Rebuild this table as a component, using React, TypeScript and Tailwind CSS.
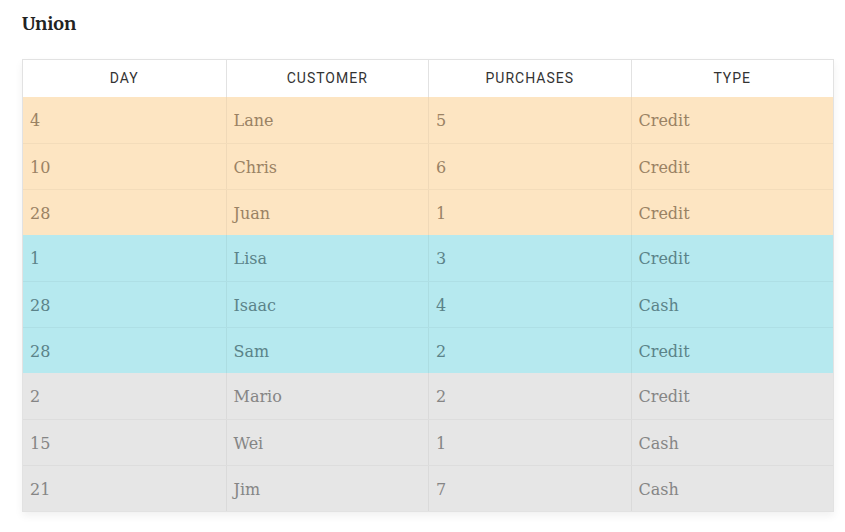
const rows = [
  { day: "4", customer: "Lane", purchases: "5", type: "Credit", tone: "orange" },
  { day: "10", customer: "Chris", purchases: "6", type: "Credit", tone: "orange" },
  { day: "28", customer: "Juan", purchases: "1", type: "Credit", tone: "orange" },
  { day: "1", customer: "Lisa", purchases: "3", type: "Credit", tone: "cyan" },
  { day: "28", customer: "Isaac", purchases: "4", type: "Cash", tone: "cyan" },
  { day: "28", customer: "Sam", purchases: "2", type: "Credit", tone: "cyan" },
  { day: "2", customer: "Mario", purchases: "2", type: "Credit", tone: "gray" },
  { day: "15", customer: "Wei", purchases: "1", type: "Cash", tone: "gray" },
  { day: "21", customer: "Jim", purchases: "7", type: "Cash", tone: "gray" },
];

const toneClass: Record<string, string> = {
  orange: "bg-[#fde5c2] text-[#9a8264]",
  cyan: "bg-[#b6e9ef] text-[#5b8389]",
  gray: "bg-[#e6e6e6] text-[#858585]",
};

const headers = ["DAY", "CUSTOMER", "PURCHASES", "TYPE"];

export default function App() {
  return (
    <div className="min-h-[532px] w-[845px] bg-white px-[22px] pt-[13px]">
      <h2 className="font-['Merriweather','DejaVu_Serif',serif] text-[18px] font-bold leading-[22px] text-[#222]">
        Union
      </h2>

      <div className="mt-[24px] w-[812px] border border-[#e2e2e2] shadow-[0_4px_8px_rgba(0,0,0,0.06)]">
        <div className="grid h-[37px] grid-cols-4 bg-white">
          {headers.map((h, i) => (
            <div
              key={h}
              className={`flex items-center justify-center font-['Roboto','Liberation_Sans',sans-serif] text-[14px] tracking-[1px] text-[#333] ${
                i > 0 ? "border-l border-[#e2e2e2]" : ""
              }`}
            >
              {h}
            </div>
          ))}
        </div>

        {rows.map((r, idx) => (
          <div
            key={idx}
            className={`grid h-[46px] grid-cols-4 font-['DejaVu_Serif',serif] text-[16px] ${toneClass[r.tone]} ${
              idx > 0 && rows[idx - 1].tone === r.tone ? "border-t border-black/[0.04]" : ""
            }`}
          >
            {[r.day, r.customer, r.purchases, r.type].map((v, i) => (
              <div
                key={i}
                className={`flex items-center px-[7px] pt-[2px] ${i > 0 ? "border-l border-black/[0.05]" : ""}`}
              >
                {v}
              </div>
            ))}
          </div>
        ))}
      </div>
    </div>
  );
}
